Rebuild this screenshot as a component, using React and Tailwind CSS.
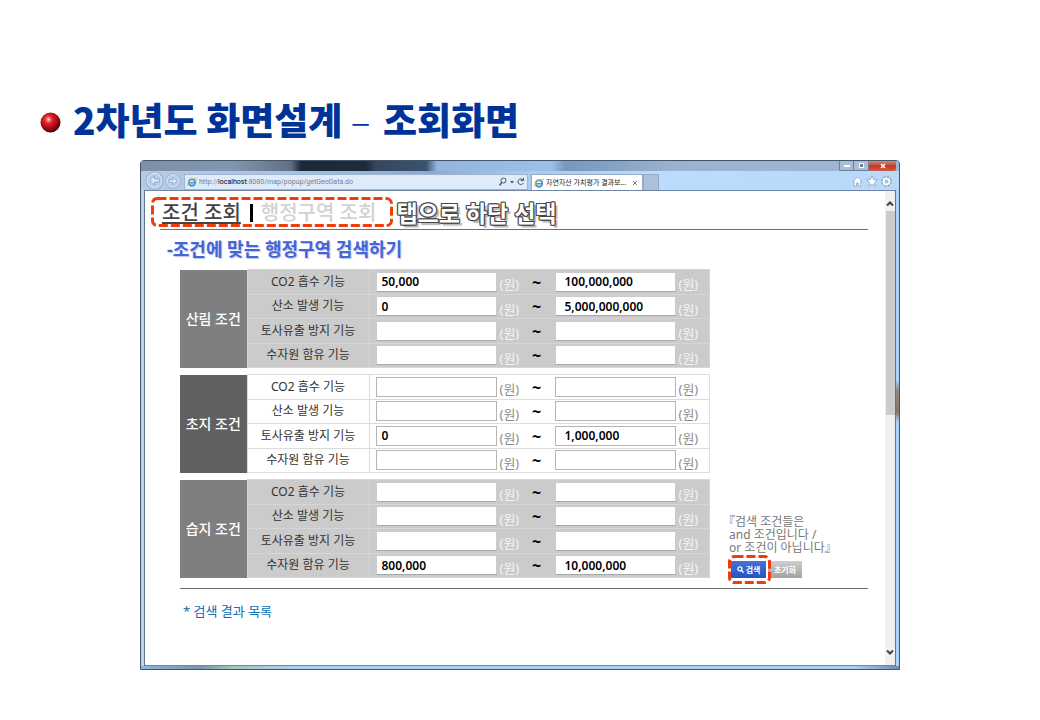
// File: src/App.jsx
// Slide with the condition search popup shown inside a browser window

import React from 'react';

const GROUPS = [
  {
    id: 'forest',
    name: '산림 조건',
    tone: 'gray',
    rows: [
      { label: 'CO2 흡수 기능', from: '50,000', to: '100,000,000' },
      { label: '산소 발생 기능', from: '0', to: '5,000,000,000' },
      { label: '토사유출 방지 기능', from: '', to: '' },
      { label: '수자원 함유 기능', from: '', to: '' },
    ],
  },
  {
    id: 'grass',
    name: '초지 조건',
    tone: 'white',
    rows: [
      { label: 'CO2 흡수 기능', from: '', to: '' },
      { label: '산소 발생 기능', from: '', to: '' },
      { label: '토사유출 방지 기능', from: '0', to: '1,000,000' },
      { label: '수자원 함유 기능', from: '', to: '' },
    ],
  },
  {
    id: 'wetland',
    name: '습지 조건',
    tone: 'gray',
    rows: [
      { label: 'CO2 흡수 기능', from: '', to: '' },
      { label: '산소 발생 기능', from: '', to: '' },
      { label: '토사유출 방지 기능', from: '', to: '' },
      { label: '수자원 함유 기능', from: '800,000', to: '10,000,000' },
    ],
  },
];

const TONES = {
  gray: {
    head: 'bg-[#7f7f7f]',
    cell: 'bg-[#cbcbcb] border-[#d6d6d6]',
    unit: 'text-[#f4f4f4]',
    input: 'border-[#cbcbcb] border-b-[#a8a8a8]',
  },
  white: {
    head: 'bg-[#606060]',
    cell: 'bg-white border-[#dcdcdc]',
    unit: 'text-[#8c8c8c]',
    input: 'border-[#b4b4b4]',
  },
};

function ExplorerIcon() {
  return (
    <svg className="size-[10px] shrink-0" viewBox="0 0 20 20" fill="none">
      <circle cx="10" cy="11" r="6.5" stroke="#3d9be0" strokeWidth="3.6" />
      <path d="M5 11.5h11" stroke="#3d9be0" strokeWidth="2.8" />
      <path d="M2 18C-1 13 8 2 18 2.5c1.6 1 .6 3.5-.6 5" stroke="#e9bd3c" strokeWidth="2" />
    </svg>
  );
}

function NavArrow({ label, flip, className }) {
  return (
    <button type="button" aria-label={label} className={`shrink-0 ${className}`}>
      <svg className="size-full" viewBox="0 0 20 20" fill="none">
        <circle cx="10" cy="10" r="9" fill="#bccfe9" stroke="#93acd2" strokeWidth="1.2" />
        <circle cx="10" cy="10" r="7.8" stroke="#dfeafa" strokeWidth="1" />
        <path
          d={flip ? 'M10 5l5 5-5 5v-3.2H5V8.2h5z' : 'M10 5l-5 5 5 5v-3.2h5V8.2h-5z'}
          fill="#dbe6f6"
          stroke="#8aa5cc"
          strokeWidth="0.9"
        />
      </svg>
    </button>
  );
}

// Red dashed frame that marks a control on the slide
function Marker({ width, height, className }) {
  return (
    <svg
      className={`pointer-events-none absolute ${className}`}
      width={width}
      height={height}
      viewBox={`0 0 ${width} ${height}`}
      fill="none"
      aria-hidden="true"
    >
      <rect
        x="1.5"
        y="1.5"
        width={width - 3}
        height={height - 3}
        rx="5"
        stroke="#f03c0a"
        strokeWidth="3"
        strokeDasharray="9 3"
      />
    </svg>
  );
}

function TitleBar() {
  return (
    <div className="flex h-[10px] items-stretch justify-end bg-[linear-gradient(90deg,#7e90a8_0,#8496ad_90px,#5f7086_150px,#1b2838_160px,#1d2b3d_225px,#35475f_235px,#3c5270_285px,#93b5dd_296px,#9dc0e8_410px,#7797bb_425px,#9ab2d0_530px,#9fb6d3_100%)] pr-[3px]">
      <button
        type="button"
        aria-label="최소화"
        className="flex w-[15px] items-end justify-center border border-t-0 border-[#6f8199] bg-[#a9bdd6] pb-[3px]"
      >
        <span className="h-[2px] w-[6px] bg-white" />
      </button>
      <button
        type="button"
        aria-label="최대화"
        className="flex w-[15px] items-center justify-center border border-t-0 border-l-0 border-[#6f8199] bg-[#a9bdd6]"
      >
        <span className="size-[5px] border border-white bg-[#71839b]" />
      </button>
      <button
        type="button"
        aria-label="닫기"
        className="flex w-[27px] items-center justify-center rounded-br-[2px] bg-gradient-to-b from-[#d98877] via-[#c03a26] to-[#cf5b42]"
      >
        <svg className="size-[6px]" viewBox="0 0 6 6">
          <path d="M1 1l4 4M5 1L1 5" stroke="#fff" strokeWidth="1.5" />
        </svg>
      </button>
    </div>
  );
}

function ToolBar() {
  return (
    <div className="flex h-[19px] items-end bg-[linear-gradient(90deg,#b7cbe6_0,#aac0dd_150px,#8fa9cb_290px,#a9c9ed_380px,#bcdcfd_530px,#b9d9fb_100%)] px-1">
      <NavArrow label="뒤로" className="size-[19px]" />
      <NavArrow label="앞으로" flip className="ml-px mb-px size-4" />
      <div className="ml-[3px] flex h-4 w-[344px] items-center gap-[2px] border border-[#9db6d6] bg-[#dfebfa] px-[2px]">
        <ExplorerIcon />
        <p className="flex-1 font-['Roboto',sans-serif] text-[7px] leading-none whitespace-nowrap text-[#74808f]">
          http://<span className="text-black">localhost</span>:8080/map/popup/getGeoData.do
        </p>
        <svg className="h-[10px] w-[26px]" viewBox="0 0 26 10" fill="none" stroke="#44566e">
          <circle cx="4.5" cy="3.5" r="2.5" />
          <path d="M2.8 5.5L.5 8.5" strokeWidth="1.3" />
          <path d="M11 4h4l-2 2.5z" fill="#44566e" stroke="none" />
          <path d="M24 3a2.8 2.8 0 1 0 .3 3M24.5.8V3.5H21.8" />
        </svg>
      </div>
      <div className="ml-[3px] flex h-4 w-[112px] items-center gap-[2px] border border-b-0 border-[#93abc9] bg-white px-[2px] text-[7px] leading-none whitespace-nowrap">
        <ExplorerIcon />
        <span className="flex-1 text-[#222]">자연자산 가치평가 결과보...</span>
        <button type="button" aria-label="탭 닫기" className="pr-[2px]">
          <svg className="size-[6px]" viewBox="0 0 6 6">
            <path d="M1 1l4 4M5 1L1 5" stroke="#777" />
          </svg>
        </button>
      </div>
      <button type="button" aria-label="새 탭" className="h-4 w-4 border border-b-0 border-[#93abc9] bg-[#adc0da]" />
      <div className="ml-auto flex items-center gap-[3px] pr-[3px] pb-[3px]">
        <svg className="size-[11px]" viewBox="0 0 12 12" fill="#fff" stroke="#8499b5" strokeWidth="0.7">
          <path d="M6 1L1 6h1.500v5h2.500V7.500h2V11h2.500V6H11z" />
        </svg>
        <svg className="size-[12px]" viewBox="0 0 12 12" fill="#fff" stroke="#8499b5" strokeWidth="0.7">
          <path d="M6 .8l1.500 3.600 3.900.3-3 2.500 1 3.800L6 9l-3.400 2 1-3.800-3-2.500 3.900-.3z" />
        </svg>
        <svg className="size-[11px]" viewBox="0 0 12 12" fill="none">
          <circle cx="6" cy="6" r="4.5" stroke="#8499b5" strokeWidth="2.4" strokeDasharray="2.3 1.2" />
          <circle cx="6" cy="6" r="3.2" stroke="#fff" strokeWidth="2.2" />
          <circle cx="6" cy="6" r="1.5" stroke="#8499b5" strokeWidth="0.7" />
        </svg>
      </div>
    </div>
  );
}

function ScrollBar() {
  return (
    <div className="flex w-[10px] shrink-0 flex-col items-center bg-[#f0f0f0]">
      <svg className="mt-[9px] mb-[4px] h-[7px] w-2" viewBox="0 0 8 7" fill="none">
        <path d="M1 5.500l3-3 3 3" stroke="#444" strokeWidth="2" />
      </svg>
      <div className="h-[204px] w-[9px] bg-[#cbcbcb]" />
      <svg className="mt-auto mb-[9px] h-[7px] w-2" viewBox="0 0 8 7" fill="none">
        <path d="M1 1.500l3 3 3-3" stroke="#444" strokeWidth="2" />
      </svg>
    </div>
  );
}

function ConditionTable({ group }) {
  const tone = TONES[group.tone];
  const inputClass = `h-5 w-[121px] border bg-white text-xs font-semibold text-black outline-none ${tone.input}`;
  const unitClass = `ml-[3px] w-[21px] pt-[5px] text-[13px] leading-4 ${tone.unit}`;

  return (
    <table className="h-[99px] w-[530px] table-fixed border-collapse">
      <colgroup>
        <col className="w-[67px]" />
        <col className="w-[122px]" />
        <col />
      </colgroup>
      <tbody>
        {group.rows.map((row, i) => {
          const id = `${group.id}-${i}`;
          return (
            <tr key={id}>
              {i === 0 && (
                <th
                  scope="rowgroup"
                  rowSpan={4}
                  className={`p-0 text-sm font-medium whitespace-nowrap text-white ${tone.head}`}
                >
                  {group.name}
                </th>
              )}
              <th scope="row" className={`border p-0 text-xs leading-4 font-normal text-[#333] ${tone.cell}`}>
                <label htmlFor={id}>{row.label}</label>
              </th>
              <td className={`border p-0 ${tone.cell}`}>
                <div className="flex items-center pl-[6px]">
                  <input id={id} type="text" defaultValue={row.from} className={`pl-[5px] ${inputClass}`} />
                  <span className={unitClass}>(원)</span>
                  <span className="w-[34px] pr-[2px] text-center text-base leading-4 font-bold text-black">~</span>
                  <input
                    type="text"
                    aria-label={`${row.label} 최대`}
                    defaultValue={row.to}
                    className={`pl-[9px] ${inputClass}`}
                  />
                  <span className={unitClass}>(원)</span>
                </div>
              </td>
            </tr>
          );
        })}
      </tbody>
    </table>
  );
}

function SearchPanel() {
  return (
    <div className="min-w-0 flex-1 bg-white pr-[17px] pb-11 pl-[15px]">
      {/* Tabs */}
      <header className="relative flex h-[39px] items-center border-b border-[#6e6e6e] pt-[6px] text-xl leading-7 whitespace-nowrap">
        <a href="#condition" className="ml-[2px] font-medium text-[#444] underline decoration-2 underline-offset-2">
          조건 조회
        </a>
        <span className="ml-[9px] mr-2 h-[18px] w-[3px] bg-black" />
        <a href="#region" className="font-medium text-[#d2d2d2]">
          행정구역 조회
        </a>
        <strong className="ml-5 text-[23px] font-bold text-white [text-shadow:1px_0_#484848,-1px_0_#484848,0_1px_#484848,0_-1px_#484848,1px_1px_#484848,-1px_-1px_#484848,1px_-1px_#484848,-1px_1px_#484848,3px_3px_1px_#b5b5b5]">
          탭으로 하단 선택
        </strong>
        <Marker width={242} height={30} className="top-[6px] -left-[9px]" />
      </header>

      <h2 className="mt-2 ml-[7px] text-lg leading-[22px] font-bold text-[#4465d8] [text-shadow:1px_1px_1px_#b9c3ea]">
        -조건에 맞는 행정구역 검색하기
      </h2>

      {/* Condition form */}
      <form className="mt-[9px] ml-5 flex items-end gap-[19px]" onSubmit={(e) => e.preventDefault()}>
        <div className="flex flex-col gap-[6px]">
          {GROUPS.map((group) => (
            <ConditionTable key={group.id} group={group} />
          ))}
        </div>
        <div className="shrink-0">
          <p className="text-xs leading-[13px] text-[#777] [font-feature-settings:'halt']">
            『검색 조건들은
            <br />
            and 조건입니다 /
            <br />
            or 조건이 아닙니다』
          </p>
          <div className="relative mt-[7px] flex gap-[2px] pl-[2px] text-[8px] leading-none font-bold text-white">
            <button
              type="submit"
              className="flex h-[17px] w-[35px] items-center justify-center gap-[2px] bg-gradient-to-b from-[#4673d8] to-[#2454c4]"
            >
              <svg className="size-[7px]" viewBox="0 0 8 8" fill="none" stroke="#fff" strokeWidth="1.5">
                <circle cx="3.3" cy="3.3" r="2.3" />
                <path d="M5 5l2.500 2.500" />
              </svg>
              검색
            </button>
            <button type="reset" className="h-[17px] w-[34px] bg-gradient-to-b from-[#cfcfcf] to-[#a2a2a2]">
              초기화
            </button>
            <Marker width={43} height={29} className="-top-[6px] -left-px" />
          </div>
        </div>
      </form>

      <hr className="mt-[10px] ml-5 border-[#6e6e6e]" />
      <h3 className="mt-3 ml-[23px] text-[13px] leading-5 text-[#0b70b5]">* 검색 결과 목록</h3>
    </div>
  );
}

export default function App() {
  return (
    <main className="min-h-screen bg-white pt-[98px] pb-[50px] font-['Noto_Sans','Noto_Sans_CJK_KR',sans-serif]">
      <h1 className="ml-10 flex h-[62px] items-start gap-3 font-['Noto_Sans_CJK_KR',sans-serif] text-[37px] leading-[43px] font-black whitespace-nowrap text-[#003399]">
        <svg className="mt-[14px] size-[21px] shrink-0" viewBox="0 0 21 21">
          <defs>
            <radialGradient id="ball" cx="0.4" cy="0.35" r="0.65">
              <stop offset="0" stopColor="#ffd0d0" />
              <stop offset="0.3" stopColor="#e0252d" />
              <stop offset="0.7" stopColor="#a80610" />
              <stop offset="1" stopColor="#3d0508" />
            </radialGradient>
          </defs>
          <circle cx="10.5" cy="10.5" r="10" fill="url(#ball)" />
        </svg>
        <span>
          2차년도 화면설계 <span className="pr-1 font-light">–</span> 조회화면
        </span>
      </h1>

      {/* Browser window */}
      <section className="mx-[140px] overflow-hidden rounded-t-[4px] border border-[#44566e] bg-[#b4d0ef]">
        <TitleBar />
        <ToolBar />
        <div className="flex">
          <div className="w-1 shrink-0 border-r border-[#5f7690] bg-[#bdd3ec]" />
          <div className="flex min-w-0 flex-1 border-y border-[#6f86a3]">
            <SearchPanel />
            <ScrollBar />
          </div>
          <div className="w-1 shrink-0 border-l border-[#5f7690] bg-[linear-gradient(180deg,#a9d3fb_0,#a9d3fb_190px,#8f8a86_200px,#8a7462_222px,#a9d3fb_232px,#a9d3fb_100%)]" />
        </div>
        <div className="h-[3px] bg-[linear-gradient(90deg,#8fb4dc_0,#7c93ad_60px,#a3c4bd_90px,#a9d0f2_150px,#a9d0f2_94%,#6f8db0_100%)]" />
      </section>
    </main>
  );
}
